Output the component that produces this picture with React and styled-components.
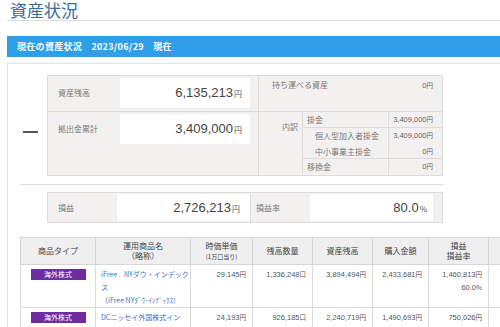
import React from 'react';
import styled, { createGlobalStyle } from 'styled-components';

const GlobalStyle = createGlobalStyle`
  body {
    margin: 0;
    background: #fff;
    font-family: "Noto Sans CJK JP", "Noto Sans", sans-serif;
    color: #333;
    overflow: hidden;
  }
`;

const funds = [
  {
    type: '海外株式',
    name: ['iFree　NYダウ・インデック', 'ス', '（iFree NYﾀﾞｳ･ｲﾝﾃﾞｯｸｽ）'],
    price: '29,145',
    units: '1,336,248',
    balance: '3,894,494',
    cost: '2,433,681',
    gain: '1,460,813',
    rate: '60.0',
  },
  {
    type: '海外株式',
    name: ['DCニッセイ外国株式イン', 'デックス'],
    price: '24,193',
    units: '926,185',
    balance: '2,240,719',
    cost: '1,490,693',
    gain: '750,026',
    rate: '50.3',
  },
];

const columns = [75, 95, 62, 60, 60, 56, 60, 92];

function App() {
  return (
    <Page>
      <GlobalStyle />
      <Title>資産状況</Title>
      <SectionBar>現在の資産状況　2023/06/29　現在</SectionBar>

      <Panel>
        <SummaryRow>
          <Gutter>
            <MinusSign />
          </Gutter>
          <InfoBox>
            <LeftCol>
              <BalanceRow h={36} line>
                <Label>資産残高</Label>
                <ValueCell>6,135,213<Unit>円</Unit></ValueCell>
              </BalanceRow>
              <BalanceRow h={63}>
                <Label>拠出金累計</Label>
                <ValueCell>3,409,000<Unit>円</Unit></ValueCell>
              </BalanceRow>
            </LeftCol>
            <RightCol>
              <PortableRow>
                <span>持ち運べる資産</span>
                <SmallNum>0<SmallUnit>円</SmallUnit></SmallNum>
              </PortableRow>
              <BreakdownRow>
                <BreakdownHead>内訳</BreakdownHead>
                <SubList>
                  <SubRow h={16} line>
                    <SubLabel>掛金</SubLabel>
                    <SubValue>3,409,000<SmallUnit>円</SmallUnit></SubValue>
                  </SubRow>
                  <SubRow h={16}>
                    <SubLabel indent>個人型加入者掛金</SubLabel>
                    <SubValue>3,409,000<SmallUnit>円</SmallUnit></SubValue>
                  </SubRow>
                  <SubRow h={15} line>
                    <SubLabel indent>中小事業主掛金</SubLabel>
                    <SubValue>0<SmallUnit>円</SmallUnit></SubValue>
                  </SubRow>
                  <SubRow h={16}>
                    <SubLabel>移換金</SubLabel>
                    <SubValue>0<SmallUnit>円</SmallUnit></SubValue>
                  </SubRow>
                </SubList>
              </BreakdownRow>
            </RightCol>
          </InfoBox>
        </SummaryRow>

        <Divider />

        <ProfitBox>
          <ProfitHalf w={202} line>
            <Label w={69}>損益</Label>
            <ProfitValue w={133} pr={10}>2,726,213<Unit>円</Unit></ProfitValue>
          </ProfitHalf>
          <ProfitHalf w={191}>
            <Label w={59} pl={5}>損益率</Label>
            <ProfitValue w={123} pr={6}>80.0<Unit>%</Unit></ProfitValue>
          </ProfitHalf>
        </ProfitBox>

        <FundTable>
          <colgroup>
            {columns.map((w, i) => (
              <col key={i} style={{ width: w }} />
            ))}
          </colgroup>
          <thead>
            <tr>
              <Th>商品タイプ</Th>
              <Th>運用商品名<br />（略称）</Th>
              <Th>時価単価<br /><Tiny>(1万口当り)</Tiny></Th>
              <Th>残高数量</Th>
              <Th>資産残高</Th>
              <Th>購入金額</Th>
              <Th>損益<br />損益率</Th>
              <Th />
            </tr>
          </thead>
          <tbody>
            {funds.map((f, i) => (
              <tr key={i}>
                <Td h={43} center>
                  <Badge>{f.type}</Badge>
                </Td>
                <Td h={43} left>
                  {f.name.map((line, j) => (
                    <FundLink key={j}>{line}</FundLink>
                  ))}
                </Td>
                <Td h={43}><Amount>{f.price}<SmallUnit>円</SmallUnit></Amount></Td>
                <Td h={43}><Amount>{f.units}<SmallUnit>口</SmallUnit></Amount></Td>
                <Td h={43}><Amount>{f.balance}<SmallUnit>円</SmallUnit></Amount></Td>
                <Td h={43}><Amount>{f.cost}<SmallUnit>円</SmallUnit></Amount></Td>
                <Td h={43}>
                  <Amount>{f.gain}<SmallUnit>円</SmallUnit></Amount>
                  <Amount>{f.rate}<SmallUnit>%</SmallUnit></Amount>
                </Td>
                <Td h={43} />
              </tr>
            ))}
          </tbody>
        </FundTable>
      </Panel>
    </Page>
  );
}

export default App;

const Page = styled.div`
  width: 600px;
  padding-left: 7px;
`;

const Title = styled.h1`
  margin: 0;
  padding-left: 3px;
  border-bottom: 1px solid #dedede;
  font-size: 17px;
  font-weight: 400;
  line-height: 20px;
  color: #3c6c9c;
`;

const SectionBar = styled.div`
  margin-top: 15px;
  height: 21px;
  padding-left: 10px;
  background: #2f9fe8;
  color: #fff;
  font-size: 9px;
  font-weight: 700;
  line-height: 21px;
  letter-spacing: 0.3px;
  white-space: pre;
`;

const Panel = styled.div`
  margin-top: 6px;
  border-top: 1px solid #e2e2e2;
  border-left: 1px solid #e2e2e2;
  padding: 11px 0 20px 12px;
`;

const SummaryRow = styled.div`
  display: flex;
`;

const Gutter = styled.div`
  width: 27px;
  padding: 56px 0 0 3px;
  box-sizing: border-box;
`;

const MinusSign = styled.div`
  width: 15px;
  height: 1.5px;
  background: #555;
`;

const InfoBox = styled.div`
  display: flex;
  width: 396px;
  box-sizing: border-box;
  border: 1px solid #dcdcdc;
  background: #f2f1ef;
`;

const LeftCol = styled.div`
  width: 211px;
  border-right: 1px solid #dcdcdc;
  box-sizing: border-box;
`;

const BalanceRow = styled.div`
  display: flex;
  align-items: flex-start;
  height: ${(p) => p.h}px;
  padding-top: 2px;
  box-sizing: border-box;
  border-bottom: ${(p) => (p.line ? '1px solid #dcdcdc' : 'none')};
`;

const Label = styled.div`
  width: ${(p) => p.w || 72}px;
  padding-left: ${(p) => (p.pl !== undefined ? p.pl : 10)}px;
  box-sizing: border-box;
  font-size: 8px;
  line-height: 30px;
  color: #7a7a7a;
  white-space: nowrap;
`;

const ValueCell = styled.div`
  width: 130px;
  height: 30px;
  padding-right: 8px;
  box-sizing: border-box;
  background: #fff;
  text-align: right;
  font-family: "Liberation Sans", sans-serif;
  font-size: 13px;
  line-height: 30px;
  color: #444;
`;

const Unit = styled.span`
  margin-left: 1px;
  font-family: "Noto Sans CJK JP", sans-serif;
  font-size: 8px;
  color: #555;
`;

const RightCol = styled.div`
  flex: 1;
  display: flex;
  flex-direction: column;
`;

const PortableRow = styled.div`
  display: flex;
  justify-content: space-between;
  height: 36px;
  padding: 1px 9px 0 13px;
  box-sizing: border-box;
  border-bottom: 1px solid #dcdcdc;
  font-size: 8px;
  line-height: 16px;
  color: #7a7a7a;
`;

const SmallNum = styled.span`
  font-family: "Liberation Sans", sans-serif;
  font-size: 7.5px;
  color: #666;
`;

const SmallUnit = styled.span`
  font-family: "Noto Sans CJK JP", sans-serif;
  font-size: 6.5px;
`;

const BreakdownRow = styled.div`
  flex: 1;
  display: flex;
`;

const BreakdownHead = styled.div`
  width: 44px;
  padding: 7px 0 0 23px;
  box-sizing: border-box;
  border-right: 1px solid #dcdcdc;
  font-size: 8px;
  line-height: 16px;
  color: #7a7a7a;
`;

const SubList = styled.div`
  flex: 1;
  display: flex;
  flex-direction: column;
`;

const SubRow = styled.div`
  display: flex;
  height: ${(p) => p.h}px;
  box-sizing: border-box;
  border-bottom: ${(p) => (p.line ? '1px solid #dcdcdc' : 'none')};
`;

const SubLabel = styled.div`
  flex: 1;
  padding-left: ${(p) => (p.indent ? 12 : 4)}px;
  border-right: 1px solid #dcdcdc;
  font-size: 8px;
  line-height: 15px;
  color: #7a7a7a;
  white-space: nowrap;
`;

const SubValue = styled.div`
  width: 53px;
  padding-right: 9px;
  box-sizing: border-box;
  text-align: right;
  font-family: "Liberation Sans", sans-serif;
  font-size: 7.5px;
  line-height: 15px;
  color: #666;
`;

const Divider = styled.div`
  width: 423px;
  margin: 8px 0 7px;
  border-top: 1px solid #dedede;
`;

const ProfitBox = styled.div`
  display: flex;
  width: 396px;
  height: 31px;
  margin-left: 27px;
  box-sizing: border-box;
  border: 1px solid #dcdcdc;
  background: #f2f1ef;
`;

const ProfitHalf = styled.div`
  display: flex;
  align-items: center;
  width: ${(p) => p.w}px;
  border-right: ${(p) => (p.line ? '1px solid #dcdcdc' : 'none')};
`;

const ProfitValue = styled(ValueCell)`
  width: ${(p) => p.w}px;
  height: 27px;
  padding-right: ${(p) => p.pr}px;
  line-height: 27px;
`;

const FundTable = styled.table`
  margin-top: 14px;
  width: 560px;
  border-collapse: collapse;
  table-layout: fixed;
`;

const Th = styled.th`
  height: 26px;
  padding: 0;
  border: 1px solid #d6d6d6;
  background: #efefef;
  font-size: 8px;
  font-weight: 400;
  line-height: 10px;
  color: #444;
  text-align: center;
  vertical-align: middle;
`;

const Tiny = styled.span`
  font-size: 6px;
`;

const Td = styled.td`
  height: ${(p) => p.h}px;
  padding: 3px ${(p) => (p.center ? 0 : 6)}px 0 ${(p) => (p.left ? 5 : 0)}px;
  box-sizing: border-box;
  border: 1px solid #dcdcdc;
  vertical-align: top;
  text-align: ${(p) => (p.center ? 'center' : p.left ? 'left' : 'right')};
`;

const Badge = styled.div`
  width: 55px;
  height: 11px;
  margin: 1px auto 0;
  background: #6f2c9f;
  color: #fff;
  font-size: 7px;
  line-height: 11px;
  text-align: center;
`;

const FundLink = styled.div`
  font-size: 7px;
  line-height: 13px;
  color: #3d72c2;
  white-space: nowrap;
`;

const Amount = styled.div`
  font-family: "Liberation Sans", sans-serif;
  font-size: 7.5px;
  line-height: 13px;
  color: #555;
`;
